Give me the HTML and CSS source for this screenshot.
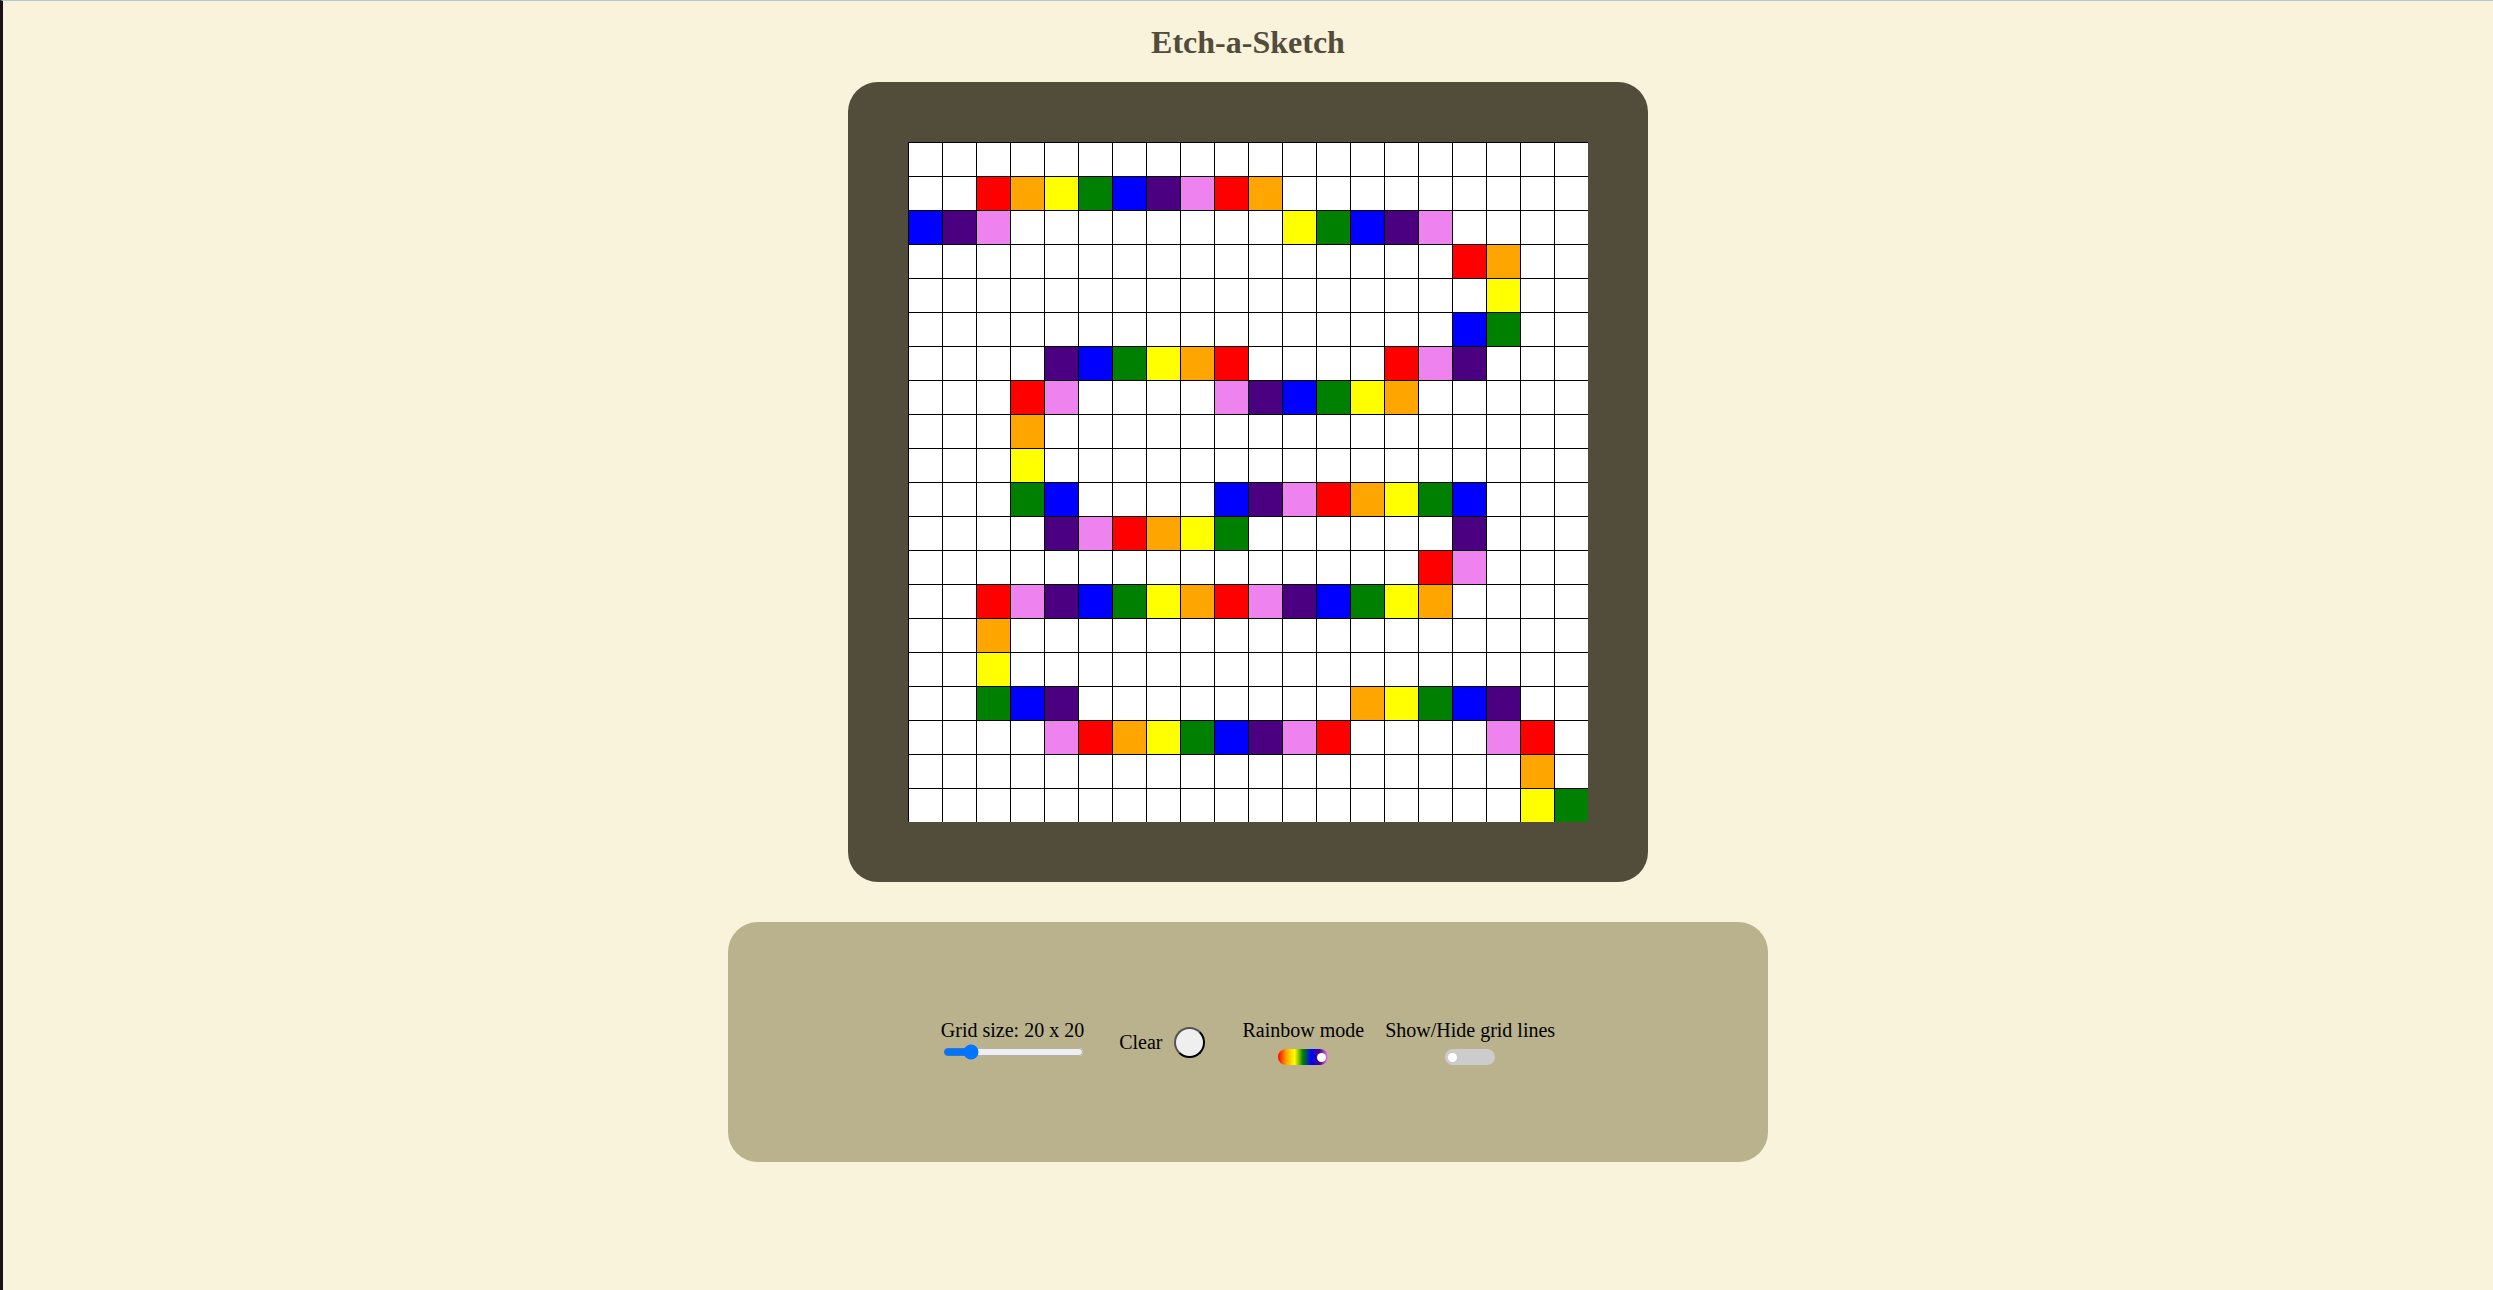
FILE: index.html
```html
<!DOCTYPE html>
<html lang="en">
<head>
<meta charset="utf-8">
<title>Etch-a-Sketch</title>
<link rel="stylesheet" href="styles.css">
</head>
<body>
<h1 class="title">Etch-a-Sketch</h1>
<div class="frame">
  <div class="grid">
    <span class="cell"></span><span class="cell"></span><span class="cell"></span><span class="cell"></span><span class="cell"></span><span class="cell"></span><span class="cell"></span><span class="cell"></span><span class="cell"></span><span class="cell"></span><span class="cell"></span><span class="cell"></span><span class="cell"></span><span class="cell"></span><span class="cell"></span><span class="cell"></span><span class="cell"></span><span class="cell"></span><span class="cell"></span><span class="cell"></span>
    <span class="cell"></span><span class="cell"></span><span class="cell red"></span><span class="cell orange"></span><span class="cell yellow"></span><span class="cell green"></span><span class="cell blue"></span><span class="cell indigo"></span><span class="cell violet"></span><span class="cell red"></span><span class="cell orange"></span><span class="cell"></span><span class="cell"></span><span class="cell"></span><span class="cell"></span><span class="cell"></span><span class="cell"></span><span class="cell"></span><span class="cell"></span><span class="cell"></span>
    <span class="cell blue"></span><span class="cell indigo"></span><span class="cell violet"></span><span class="cell"></span><span class="cell"></span><span class="cell"></span><span class="cell"></span><span class="cell"></span><span class="cell"></span><span class="cell"></span><span class="cell"></span><span class="cell yellow"></span><span class="cell green"></span><span class="cell blue"></span><span class="cell indigo"></span><span class="cell violet"></span><span class="cell"></span><span class="cell"></span><span class="cell"></span><span class="cell"></span>
    <span class="cell"></span><span class="cell"></span><span class="cell"></span><span class="cell"></span><span class="cell"></span><span class="cell"></span><span class="cell"></span><span class="cell"></span><span class="cell"></span><span class="cell"></span><span class="cell"></span><span class="cell"></span><span class="cell"></span><span class="cell"></span><span class="cell"></span><span class="cell"></span><span class="cell red"></span><span class="cell orange"></span><span class="cell"></span><span class="cell"></span>
    <span class="cell"></span><span class="cell"></span><span class="cell"></span><span class="cell"></span><span class="cell"></span><span class="cell"></span><span class="cell"></span><span class="cell"></span><span class="cell"></span><span class="cell"></span><span class="cell"></span><span class="cell"></span><span class="cell"></span><span class="cell"></span><span class="cell"></span><span class="cell"></span><span class="cell"></span><span class="cell yellow"></span><span class="cell"></span><span class="cell"></span>
    <span class="cell"></span><span class="cell"></span><span class="cell"></span><span class="cell"></span><span class="cell"></span><span class="cell"></span><span class="cell"></span><span class="cell"></span><span class="cell"></span><span class="cell"></span><span class="cell"></span><span class="cell"></span><span class="cell"></span><span class="cell"></span><span class="cell"></span><span class="cell"></span><span class="cell blue"></span><span class="cell green"></span><span class="cell"></span><span class="cell"></span>
    <span class="cell"></span><span class="cell"></span><span class="cell"></span><span class="cell"></span><span class="cell indigo"></span><span class="cell blue"></span><span class="cell green"></span><span class="cell yellow"></span><span class="cell orange"></span><span class="cell red"></span><span class="cell"></span><span class="cell"></span><span class="cell"></span><span class="cell"></span><span class="cell red"></span><span class="cell violet"></span><span class="cell indigo"></span><span class="cell"></span><span class="cell"></span><span class="cell"></span>
    <span class="cell"></span><span class="cell"></span><span class="cell"></span><span class="cell red"></span><span class="cell violet"></span><span class="cell"></span><span class="cell"></span><span class="cell"></span><span class="cell"></span><span class="cell violet"></span><span class="cell indigo"></span><span class="cell blue"></span><span class="cell green"></span><span class="cell yellow"></span><span class="cell orange"></span><span class="cell"></span><span class="cell"></span><span class="cell"></span><span class="cell"></span><span class="cell"></span>
    <span class="cell"></span><span class="cell"></span><span class="cell"></span><span class="cell orange"></span><span class="cell"></span><span class="cell"></span><span class="cell"></span><span class="cell"></span><span class="cell"></span><span class="cell"></span><span class="cell"></span><span class="cell"></span><span class="cell"></span><span class="cell"></span><span class="cell"></span><span class="cell"></span><span class="cell"></span><span class="cell"></span><span class="cell"></span><span class="cell"></span>
    <span class="cell"></span><span class="cell"></span><span class="cell"></span><span class="cell yellow"></span><span class="cell"></span><span class="cell"></span><span class="cell"></span><span class="cell"></span><span class="cell"></span><span class="cell"></span><span class="cell"></span><span class="cell"></span><span class="cell"></span><span class="cell"></span><span class="cell"></span><span class="cell"></span><span class="cell"></span><span class="cell"></span><span class="cell"></span><span class="cell"></span>
    <span class="cell"></span><span class="cell"></span><span class="cell"></span><span class="cell green"></span><span class="cell blue"></span><span class="cell"></span><span class="cell"></span><span class="cell"></span><span class="cell"></span><span class="cell blue"></span><span class="cell indigo"></span><span class="cell violet"></span><span class="cell red"></span><span class="cell orange"></span><span class="cell yellow"></span><span class="cell green"></span><span class="cell blue"></span><span class="cell"></span><span class="cell"></span><span class="cell"></span>
    <span class="cell"></span><span class="cell"></span><span class="cell"></span><span class="cell"></span><span class="cell indigo"></span><span class="cell violet"></span><span class="cell red"></span><span class="cell orange"></span><span class="cell yellow"></span><span class="cell green"></span><span class="cell"></span><span class="cell"></span><span class="cell"></span><span class="cell"></span><span class="cell"></span><span class="cell"></span><span class="cell indigo"></span><span class="cell"></span><span class="cell"></span><span class="cell"></span>
    <span class="cell"></span><span class="cell"></span><span class="cell"></span><span class="cell"></span><span class="cell"></span><span class="cell"></span><span class="cell"></span><span class="cell"></span><span class="cell"></span><span class="cell"></span><span class="cell"></span><span class="cell"></span><span class="cell"></span><span class="cell"></span><span class="cell"></span><span class="cell red"></span><span class="cell violet"></span><span class="cell"></span><span class="cell"></span><span class="cell"></span>
    <span class="cell"></span><span class="cell"></span><span class="cell red"></span><span class="cell violet"></span><span class="cell indigo"></span><span class="cell blue"></span><span class="cell green"></span><span class="cell yellow"></span><span class="cell orange"></span><span class="cell red"></span><span class="cell violet"></span><span class="cell indigo"></span><span class="cell blue"></span><span class="cell green"></span><span class="cell yellow"></span><span class="cell orange"></span><span class="cell"></span><span class="cell"></span><span class="cell"></span><span class="cell"></span>
    <span class="cell"></span><span class="cell"></span><span class="cell orange"></span><span class="cell"></span><span class="cell"></span><span class="cell"></span><span class="cell"></span><span class="cell"></span><span class="cell"></span><span class="cell"></span><span class="cell"></span><span class="cell"></span><span class="cell"></span><span class="cell"></span><span class="cell"></span><span class="cell"></span><span class="cell"></span><span class="cell"></span><span class="cell"></span><span class="cell"></span>
    <span class="cell"></span><span class="cell"></span><span class="cell yellow"></span><span class="cell"></span><span class="cell"></span><span class="cell"></span><span class="cell"></span><span class="cell"></span><span class="cell"></span><span class="cell"></span><span class="cell"></span><span class="cell"></span><span class="cell"></span><span class="cell"></span><span class="cell"></span><span class="cell"></span><span class="cell"></span><span class="cell"></span><span class="cell"></span><span class="cell"></span>
    <span class="cell"></span><span class="cell"></span><span class="cell green"></span><span class="cell blue"></span><span class="cell indigo"></span><span class="cell"></span><span class="cell"></span><span class="cell"></span><span class="cell"></span><span class="cell"></span><span class="cell"></span><span class="cell"></span><span class="cell"></span><span class="cell orange"></span><span class="cell yellow"></span><span class="cell green"></span><span class="cell blue"></span><span class="cell indigo"></span><span class="cell"></span><span class="cell"></span>
    <span class="cell"></span><span class="cell"></span><span class="cell"></span><span class="cell"></span><span class="cell violet"></span><span class="cell red"></span><span class="cell orange"></span><span class="cell yellow"></span><span class="cell green"></span><span class="cell blue"></span><span class="cell indigo"></span><span class="cell violet"></span><span class="cell red"></span><span class="cell"></span><span class="cell"></span><span class="cell"></span><span class="cell"></span><span class="cell violet"></span><span class="cell red"></span><span class="cell"></span>
    <span class="cell"></span><span class="cell"></span><span class="cell"></span><span class="cell"></span><span class="cell"></span><span class="cell"></span><span class="cell"></span><span class="cell"></span><span class="cell"></span><span class="cell"></span><span class="cell"></span><span class="cell"></span><span class="cell"></span><span class="cell"></span><span class="cell"></span><span class="cell"></span><span class="cell"></span><span class="cell"></span><span class="cell orange"></span><span class="cell"></span>
    <span class="cell"></span><span class="cell"></span><span class="cell"></span><span class="cell"></span><span class="cell"></span><span class="cell"></span><span class="cell"></span><span class="cell"></span><span class="cell"></span><span class="cell"></span><span class="cell"></span><span class="cell"></span><span class="cell"></span><span class="cell"></span><span class="cell"></span><span class="cell"></span><span class="cell"></span><span class="cell"></span><span class="cell yellow"></span><span class="cell green"></span>
  </div>
</div>
<div class="controls">
  <div class="control-row">
    <div class="size-control">
      <label class="label" for="size">Grid size: 20 x 20</label>
      <input class="size-slider" id="size" type="range" min="5" max="100" value="20">
    </div>
    <div class="clear-control">
      <span class="label">Clear</span>
      <button class="clear-btn" type="button" aria-label="Clear"></button>
    </div>
    <div class="toggle-control">
      <span class="label">Rainbow mode</span>
      <label class="switch">
        <input class="switch-input" type="checkbox" checked>
        <span class="track rainbow"></span>
      </label>
    </div>
    <div class="toggle-control">
      <span class="label">Show/Hide grid lines</span>
      <label class="switch">
        <input class="switch-input" type="checkbox">
        <span class="track plain"></span>
      </label>
    </div>
  </div>
</div>
</body>
</html>
```

FILE: styles.css
```css
html {
  min-height: 100vh;
  box-sizing: border-box;
  border-left: 3px solid #1b1219;
  border-top: 1px solid #b8c7d4;
  background: #f9f3dc;
}

body {
  margin: 0;
  font-family: "Liberation Serif", "Times New Roman", serif;
  color: #000;
  display: flex;
  flex-direction: column;
  align-items: center;
}

.title {
  margin: 23px 0 21px;
  font-size: 32px;
  line-height: 37px;
  font-weight: bold;
  color: #524c3b;
}

.frame {
  width: 800px;
  height: 800px;
  box-sizing: border-box;
  padding: 60px;
  background: #524c3b;
  border-radius: 30px;
}

.grid {
  display: grid;
  grid-template-columns: repeat(20, 34px);
  grid-template-rows: repeat(20, 34px);
  width: 680px;
  height: 680px;
}

.cell {
  box-sizing: border-box;
  border-top: 1px solid #000;
  border-left: 1px solid #000;
  background: #fff;
}

.red { background: #ff0000; }
.orange { background: #ffa500; }
.yellow { background: #ffff00; }
.green { background: #008000; }
.blue { background: #0000ff; }
.indigo { background: #4b0082; }
.violet { background: #ee82ee; }

.controls {
  margin-top: 40px;
  width: 1040px;
  height: 240px;
  background: #b9b28c;
  border-radius: 30px;
  display: flex;
  justify-content: center;
  align-items: center;
}

.control-row {
  display: flex;
  align-items: flex-start;
  font-size: 20px;
}

.label {
  line-height: 23px;
}

.size-control {
  display: flex;
  flex-direction: column;
  align-items: center;
}

.size-slider {
  width: 141px;
  margin: 2px 0 2px 2px;
}

.clear-control {
  align-self: center;
  display: flex;
  align-items: center;
  margin: 0 37px 0 35px;
}

.clear-btn {
  box-sizing: border-box;
  width: 31px;
  height: 31px;
  margin: 0 0 0 12px;
  padding: 0;
  border-radius: 50%;
  border: 2px outset #000;
  background: #efefef;
}

.toggle-control {
  display: flex;
  flex-direction: column;
  align-items: center;
}

.toggle-control + .toggle-control {
  margin-left: 21px;
}

.switch {
  display: block;
  margin-top: 7.5px;
  width: 50px;
  height: 16px;
}

.switch-input {
  display: none;
}

.track {
  position: relative;
  display: block;
  width: 50px;
  height: 16px;
  border-radius: 8px;
}

.track::before {
  content: "";
  position: absolute;
  top: 3.5px;
  left: 3px;
  width: 9px;
  height: 9px;
  border-radius: 50%;
  background: #fff;
}

.rainbow {
  background: linear-gradient(to right, #ff0000, #ffa500, #ffff00, #008000, #0000ff, #4b0082, #ee82ee);
}

.rainbow::before {
  left: auto;
  right: 2px;
}

.plain {
  background: #cccccc;
}
```
